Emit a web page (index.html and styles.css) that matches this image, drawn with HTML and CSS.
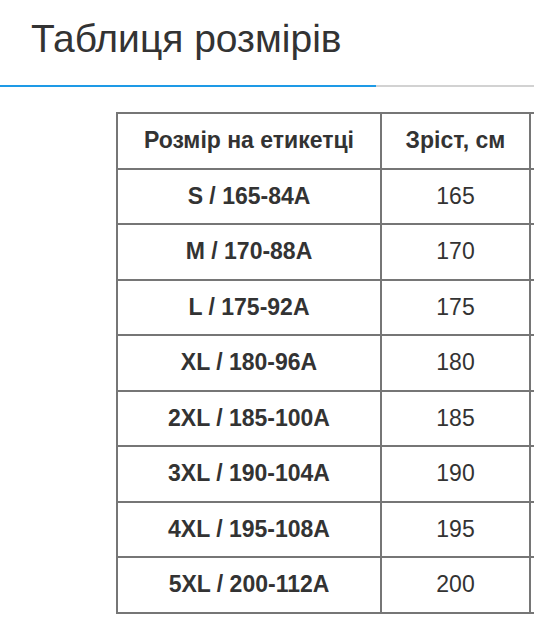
FILE: index.html
```html
<!DOCTYPE html>
<html lang="uk">
<head>
<meta charset="utf-8">
<link rel="stylesheet" href="styles.css">
</head>
<body>
<div class="page">
  <div class="title-bar">
    <h1 class="title">Таблиця розмірів</h1>
  </div>
  <div class="table-wrap">
    <table class="sizes">
      <tr><th>Розмір на етикетці</th><th class="c2">Зріст, см</th><th class="c3"></th></tr>
      <tr><td class="lbl">S / 165-84A</td><td>165</td><td></td></tr>
      <tr><td class="lbl">M / 170-88A</td><td>170</td><td></td></tr>
      <tr><td class="lbl">L / 175-92A</td><td>175</td><td></td></tr>
      <tr><td class="lbl">XL / 180-96A</td><td>180</td><td></td></tr>
      <tr><td class="lbl">2XL / 185-100A</td><td>185</td><td></td></tr>
      <tr><td class="lbl">3XL / 190-104A</td><td>190</td><td></td></tr>
      <tr><td class="lbl">4XL / 195-108A</td><td>195</td><td></td></tr>
      <tr><td class="lbl">5XL / 200-112A</td><td>200</td><td></td></tr>
    </table>
  </div>
</div>
</body>
</html>
```

FILE: styles.css
```css
html, body {
  margin: 0;
  padding: 0;
  background: #fff;
}
body {
  font-family: "Liberation Sans", Arial, sans-serif;
  color: #333;
  width: 534px;
  overflow: hidden;
}
.page {
  width: 534px;
  overflow: hidden;
}
.title-bar {
  border-bottom: 2px solid #d2d2d2;
}
.title {
  margin: 0 0 -2px 0;
  width: 345px;
  padding: 15px 0 23px 31px;
  font-size: 39px;
  font-weight: normal;
  line-height: 47px;
  color: #333;
  border-bottom: 2px solid #1e9ae6;
}
.table-wrap {
  padding: 25px 0 0 116px;
}
.sizes {
  border-collapse: collapse;
  table-layout: fixed;
  width: 600px;
}
.sizes th, .sizes td {
  border: 2px solid #767676;
  height: 53.5px;
  padding: 0;
  text-align: center;
  font-size: 23px;
  color: #333;
}
.sizes th {
  font-weight: bold;
  width: 262px;
}
.sizes th.c2 {
  width: 147px;
}
.sizes th.c3 {
  width: 185px;
}
.sizes td {
  font-weight: normal;
}
.sizes td.lbl {
  font-weight: bold;
}
```
